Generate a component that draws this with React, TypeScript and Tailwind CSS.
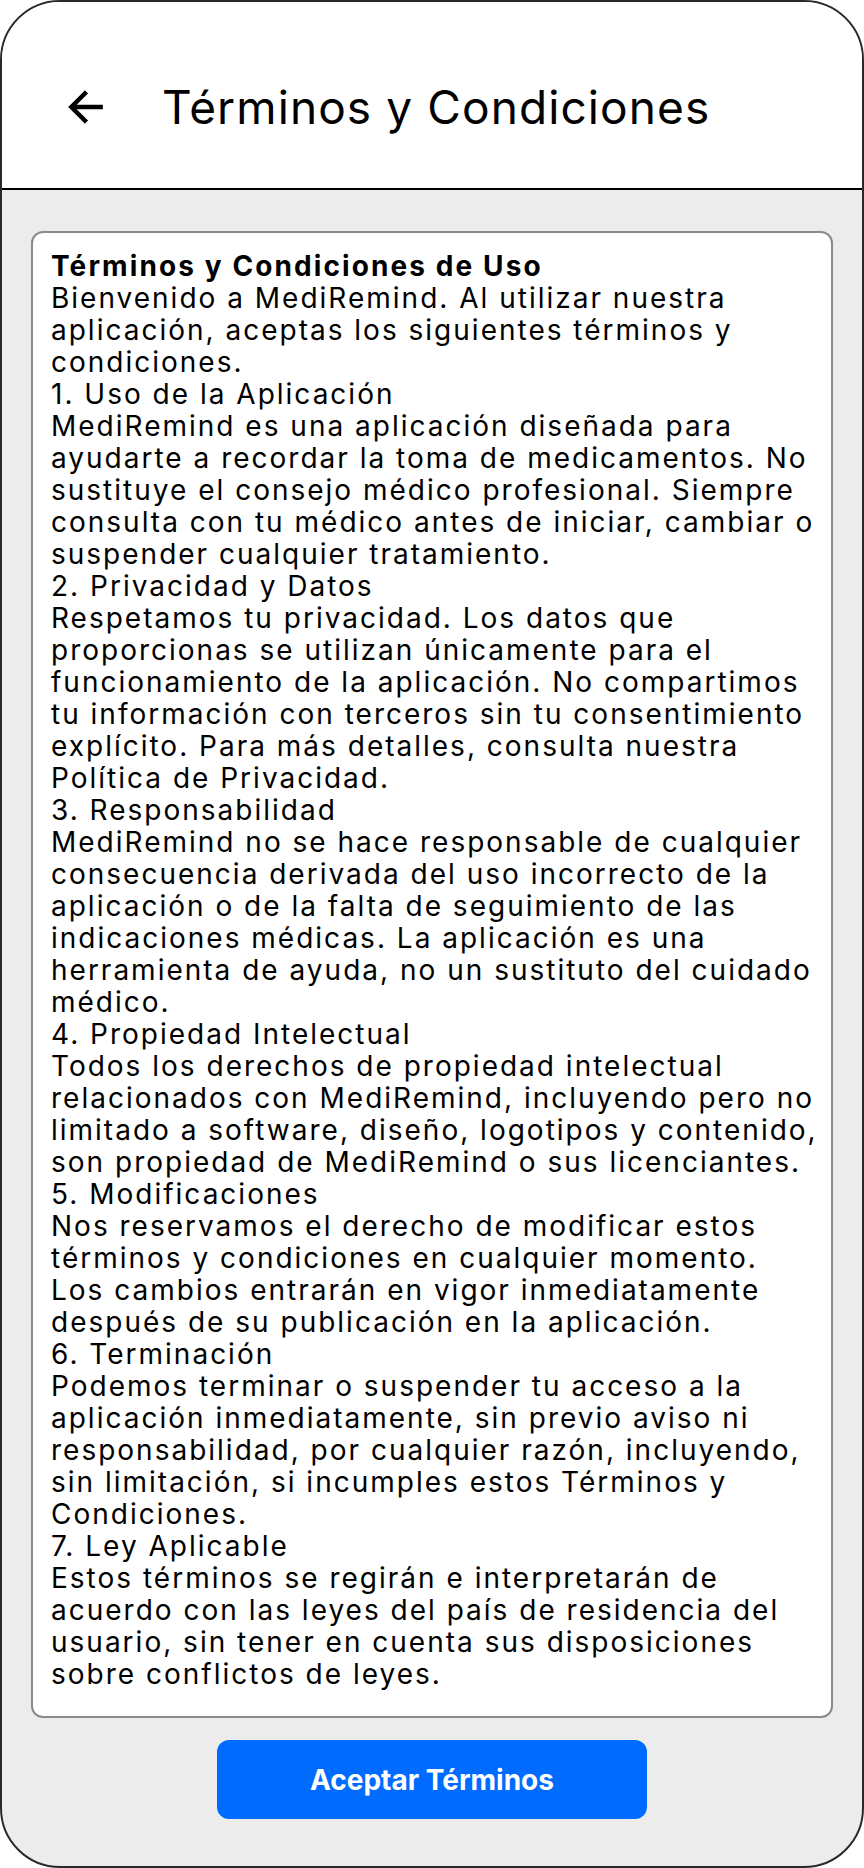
export default function App() {
  const sections = [
    {
      title: "1. Uso de la Aplicación",
      body: "MediRemind es una aplicación diseñada para ayudarte a recordar la toma de medicamentos. No sustituye el consejo médico profesional. Siempre consulta con tu médico antes de iniciar, cambiar o suspender cualquier tratamiento.",
    },
    {
      title: "2. Privacidad y Datos",
      body: "Respetamos tu privacidad. Los datos que proporcionas se utilizan únicamente para el funcionamiento de la aplicación. No compartimos tu información con terceros sin tu consentimiento explícito. Para más detalles, consulta nuestra Política de Privacidad.",
    },
    {
      title: "3. Responsabilidad",
      body: "MediRemind no se hace responsable de cualquier consecuencia derivada del uso incorrecto de la aplicación o de la falta de seguimiento de las indicaciones médicas. La aplicación es una herramienta de ayuda, no un sustituto del cuidado médico.",
    },
    {
      title: "4. Propiedad Intelectual",
      body: "Todos los derechos de propiedad intelectual relacionados con MediRemind, incluyendo pero no limitado a software, diseño, logotipos y contenido, son propiedad de MediRemind o sus licenciantes.",
    },
    {
      title: "5. Modificaciones",
      body: "Nos reservamos el derecho de modificar estos términos y condiciones en cualquier momento. Los cambios entrarán en vigor inmediatamente después de su publicación en la aplicación.",
    },
    {
      title: "6. Terminación",
      body: "Podemos terminar o suspender tu acceso a la aplicación inmediatamente, sin previo aviso ni responsabilidad, por cualquier razón, incluyendo, sin limitación, si incumples estos Términos y Condiciones.",
    },
    {
      title: "7. Ley Aplicable",
      body: "Estos términos se regirán e interpretarán de acuerdo con las leyes del país de residencia del usuario, sin tener en cuenta sus disposiciones sobre conflictos de leyes.",
    },
  ];

  return (
    <div className="h-[1868px] w-[864px] bg-white font-['Inter','Noto_Sans',sans-serif] text-black">
      <div className="flex h-full flex-col overflow-hidden rounded-[60px] border-2 border-[#2a2a2a] bg-[#ececec]">
        {/* header */}
        <div className="flex h-[188px] shrink-0 items-center border-b-2 border-black bg-white pl-[60px] pt-[24px]">
          <svg viewBox="0 0 512 512" className="h-[48px] w-[48px]" fill="none" stroke="currentColor">
            <path d="M244 400L100 256l144-144M120 256h292" strokeWidth="48" strokeLinecap="square" strokeLinejoin="miter" />
          </svg>
          <h1 className="ml-[52px] text-[46px] leading-none font-normal tracking-[1.1px]">Términos y Condiciones</h1>
        </div>

        {/* content card */}
        <div className="mx-[29px] mt-[41px] rounded-[12px] border-2 border-[#8a8a8a] bg-white pt-[17px] pr-[12px] pb-[26px] pl-[18px] text-[28px] leading-[32px] tracking-[2px]">
          <p className="font-bold tracking-[2.1px]">Términos y Condiciones de Uso</p>
          <p>Bienvenido a MediRemind. Al utilizar nuestra aplicación, aceptas los siguientes términos y condiciones.</p>
          {sections.map((s) => (
            <div key={s.title}>
              <p>{s.title}</p>
              <p>{s.body}</p>
            </div>
          ))}
        </div>

        {/* accept button */}
        <div className="flex justify-center pt-[22px]">
          <button className="h-[79px] w-[430px] rounded-[12px] bg-[#006cff] text-[28px] font-bold text-white">
            Aceptar Términos
          </button>
        </div>
      </div>
    </div>
  );
}
